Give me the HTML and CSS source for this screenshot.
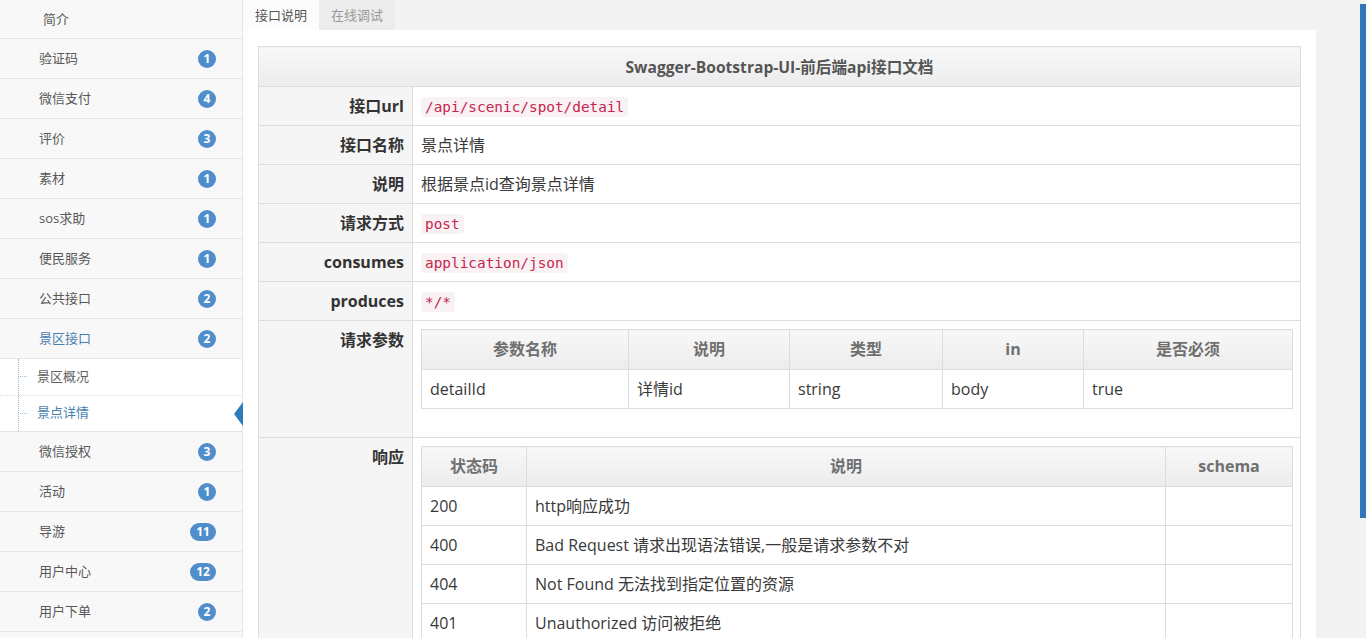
FILE: index.html
```html
<!DOCTYPE html>
<html lang="zh-CN">
<head>
<meta charset="utf-8">
<title>Swagger-Bootstrap-UI</title>
<link rel="stylesheet" href="styles.css">
</head>
<body>
<div class="layout">
  <aside class="sidebar">
    <ul class="nav">
      <li class="nav-item first"><span class="nav-text">简介</span></li>
      <li class="nav-item"><span class="nav-text">验证码</span><span class="badge">1</span></li>
      <li class="nav-item"><span class="nav-text">微信支付</span><span class="badge">4</span></li>
      <li class="nav-item"><span class="nav-text">评价</span><span class="badge">3</span></li>
      <li class="nav-item"><span class="nav-text">素材</span><span class="badge">1</span></li>
      <li class="nav-item"><span class="nav-text">sos求助</span><span class="badge">1</span></li>
      <li class="nav-item"><span class="nav-text">便民服务</span><span class="badge">1</span></li>
      <li class="nav-item"><span class="nav-text">公共接口</span><span class="badge">2</span></li>
      <li class="nav-item open"><span class="nav-text">景区接口</span><span class="badge">2</span></li>
      <li class="submenu">
        <ul class="sub-list">
          <li class="sub-item">景区概况</li>
          <li class="sub-item active">景点详情</li>
        </ul>
      </li>
      <li class="nav-item"><span class="nav-text">微信授权</span><span class="badge">3</span></li>
      <li class="nav-item"><span class="nav-text">活动</span><span class="badge">1</span></li>
      <li class="nav-item"><span class="nav-text">导游</span><span class="badge wide">11</span></li>
      <li class="nav-item"><span class="nav-text">用户中心</span><span class="badge wide">12</span></li>
      <li class="nav-item"><span class="nav-text">用户下单</span><span class="badge">2</span></li>
    </ul>
  </aside>
  <main class="main">
    <div class="tabs">
      <span class="tab active">接口说明</span>
      <span class="tab">在线调试</span>
    </div>
    <div class="content">
      <div class="panel">
        <table class="doc">
          <colgroup><col class="col-label"><col></colgroup>
          <thead>
            <tr class="title"><th colspan="2">Swagger-Bootstrap-UI-前后端api接口文档</th></tr>
          </thead>
          <tbody>
            <tr><td class="label">接口url</td><td><code>/api/scenic/spot/detail</code></td></tr>
            <tr><td class="label">接口名称</td><td>景点详情</td></tr>
            <tr><td class="label">说明</td><td>根据景点id查询景点详情</td></tr>
            <tr><td class="label">请求方式</td><td><code>post</code></td></tr>
            <tr><td class="label">consumes</td><td><code>application/json</code></td></tr>
            <tr><td class="label">produces</td><td><code>*/*</code></td></tr>
            <tr>
              <td class="label">请求参数</td>
              <td>
                <table class="inner">
                  <colgroup><col class="p1"><col class="p2"><col class="p3"><col class="p4"><col class="p5"></colgroup>
                  <thead><tr><th>参数名称</th><th>说明</th><th>类型</th><th>in</th><th>是否必须</th></tr></thead>
                  <tbody><tr><td>detailId</td><td>详情id</td><td>string</td><td>body</td><td>true</td></tr></tbody>
                </table>
              </td>
            </tr>
            <tr>
              <td class="label">响应</td>
              <td>
                <table class="inner">
                  <colgroup><col class="r1"><col class="r2"><col class="r3"></colgroup>
                  <thead><tr><th>状态码</th><th>说明</th><th>schema</th></tr></thead>
                  <tbody>
                    <tr><td>200</td><td>http响应成功</td><td></td></tr>
                    <tr><td>400</td><td>Bad Request 请求出现语法错误,一般是请求参数不对</td><td></td></tr>
                    <tr><td>404</td><td>Not Found 无法找到指定位置的资源</td><td></td></tr>
                    <tr><td>401</td><td>Unauthorized 访问被拒绝</td><td></td></tr>
                  </tbody>
                </table>
              </td>
            </tr>
          </tbody>
        </table>
      </div>
    </div>
  </main>
  <div class="scrollbar"></div>
</div>
</body>
</html>
```

FILE: styles.css
```css
* { box-sizing: border-box; }

html, body {
  margin: 0;
  height: 100%;
  overflow: hidden;
}

body {
  font-family: "Open Sans", "Noto Sans CJK SC", sans-serif;
  color: #393939;
  background: #f2f2f2;
}

.layout {
  display: flex;
  height: 638px;
  position: relative;
  overflow: hidden;
}

/* ---------- sidebar ---------- */
.sidebar {
  width: 243px;
  flex: none;
  background: #f8f8f8;
  border-right: 1px solid #e5e5e5;
  height: 100%;
}

.nav, .sub-list {
  list-style: none;
  margin: 0;
  padding: 0;
}

.nav-item {
  display: flex;
  align-items: center;
  justify-content: space-between;
  height: 40px;
  padding: 0 26px 1px 39px;
  border-bottom: 1px solid #e5e5e5;
  font-size: 13px;
  line-height: 18px;
  color: #585858;
}

.nav-item .badge { margin-top: 1px; }

.nav-item.first {
  height: 39px;
  padding-left: 43px;
}

.nav-item.open { color: #4b7fb3; }

.badge {
  display: inline-block;
  min-width: 18px;
  height: 18px;
  padding: 0 5px;
  border-radius: 9px;
  background: #4f8ecb;
  color: #fff;
  font-size: 12px;
  font-weight: bold;
  line-height: 18px;
  text-align: center;
}

.badge.wide {
  min-width: 26px;
  padding: 0 6px;
}

.submenu {
  position: relative;
  background: #fff;
  border-bottom: 1px solid #e5e5e5;
}

.submenu::before {
  content: "";
  position: absolute;
  left: 18px;
  top: 0;
  bottom: 0;
  border-left: 1px dotted #9dbdd6;
}

.sub-item {
  position: relative;
  display: flex;
  align-items: center;
  height: 36px;
  padding-left: 37px;
  padding-bottom: 3px;
  font-size: 13px;
  line-height: 18px;
  color: #616161;
}

.sub-item + .sub-item { border-top: 1px dotted #e0e0e0; }

.sub-item::before {
  content: "";
  position: absolute;
  left: 20px;
  top: 17px;
  width: 7px;
  border-top: 1px dotted #9dbdd6;
}

.sub-item.active { color: #4b7fb3; }

.sub-item.active::after {
  content: "";
  position: absolute;
  right: -1px;
  top: 6px;
  border-style: solid;
  border-width: 12px 9px 12px 0;
  border-color: transparent #2b7dbc transparent transparent;
}

/* ---------- main ---------- */
.main {
  flex: 1;
  min-width: 0;
  display: flex;
  flex-direction: column;
}

.tabs {
  display: flex;
  height: 30px;
  flex: none;
}

.tab {
  padding: 0 12px;
  font-size: 13px;
  line-height: 30px;
  color: #999;
  background: #ececec;
}

.tab.active {
  background: #fcfcfc;
  color: #555;
}

.content {
  flex: 1;
  display: flex;
  min-height: 0;
}

.panel {
  width: 1073px;
  background: #fff;
  padding: 16px 15px 0;
}

/* ---------- tables ---------- */
.doc {
  width: 100%;
  border-collapse: collapse;
  table-layout: fixed;
  font-size: 16px;
  line-height: 22px;
}

.doc th, .doc td {
  border: 1px solid #ddd;
  padding: 8px;
  text-align: left;
  vertical-align: top;
}

.col-label { width: 154px; }

.doc .title th {
  background: linear-gradient(#f8f8f8, #ececec);
  color: #555;
  text-align: center;
  font-weight: bold;
  font-size: 15.6px;
  padding: 9px 8px 8px;
}

.doc td.label {
  background: #f5f5f5;
  text-align: right;
  font-weight: bold;
  color: #333;
}

code {
  font-family: "DejaVu Sans Mono", "Liberation Mono", monospace;
  font-size: 90%;
  line-height: 16px;
  padding: 2px 4px;
  color: #c7254e;
  background: #f9f2f4;
  border-radius: 4px;
}

.inner {
  width: 100%;
  border-collapse: collapse;
  table-layout: fixed;
  margin-bottom: 20px;
}

.doc .inner th {
  background: linear-gradient(#f8f8f8, #ececec);
  color: #707070;
  font-weight: bold;
  text-align: center;
  padding: 8px 8px 9px;
}

.doc .inner td { padding: 8px; }

.p1 { width: 207px; }
.p2 { width: 161px; }
.p3 { width: 153px; }
.p4 { width: 141px; }
.p5 { width: 209px; }

.r1 { width: 105px; }
.r2 { width: 639px; }
.r3 { width: 127px; }

/* overlay scrollbar */
.scrollbar {
  position: absolute;
  right: 0;
  top: 4px;
  width: 6px;
  height: 514px;
  background: #2f78b9;
}
```
